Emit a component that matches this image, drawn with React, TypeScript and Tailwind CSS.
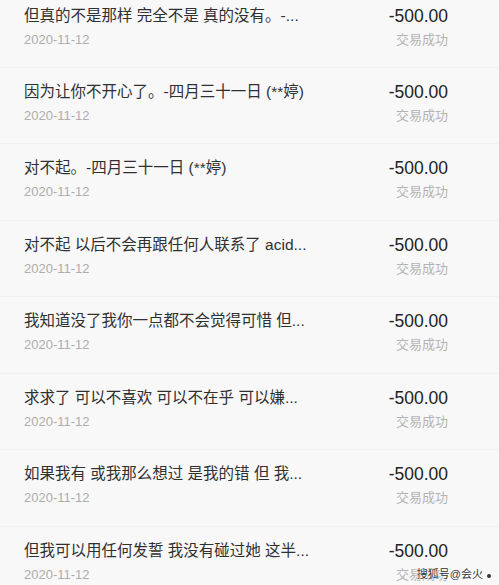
import React from "react";

const rows = [
  "但真的不是那样 完全不是 真的没有。-...",
  "因为让你不开心了。-四月三十一日 (**婷)",
  "对不起。-四月三十一日 (**婷)",
  "对不起 以后不会再跟任何人联系了 acid...",
  "我知道没了我你一点都不会觉得可惜 但...",
  "求求了 可以不喜欢 可以不在乎 可以嫌...",
  "如果我有 或我那么想过 是我的错 但 我...",
  "但我可以用任何发誓 我没有碰过她 这半...",
];

export default function App() {
  return (
    <div
      className="relative w-[499px] h-[585px] overflow-hidden bg-[#f8f8f9]"
      style={{ fontFamily: '"Liberation Sans", "Noto Sans CJK SC", sans-serif' }}
    >
      <div className="flex flex-col">
        {rows.map((t, i) => (
          <div
            key={i}
            className={`flex items-start justify-between pl-[24px] pr-[51px] border-b border-[#f1f1f3] ${
              i === 0 ? "h-[68px] pt-[6px]" : i % 2 === 0 ? "h-[77px] pt-[14px]" : "h-[76px] pt-[14px]"
            }`}
          >
            <div className="flex flex-col">
              <div className="text-[15.5px] leading-[20px] text-[#303030] whitespace-nowrap">{t}</div>
              <div className="mt-[6px] text-[13px] leading-[16px] text-[#adadad]">2020-11-12</div>
            </div>
            <div className="flex flex-col items-end">
              <div className="text-[17.5px] leading-[20px] text-[#222222]">-500.00</div>
              <div className="mt-[6px] text-[13px] leading-[16px] text-[#b3b3b3]">交易成功</div>
            </div>
          </div>
        ))}
      </div>
      <div
        className="absolute right-[8px] bottom-[4px] text-[11px] leading-[14px] text-[#333] flex items-center gap-[4px]"
        style={{ textShadow: "0 0 2px #fff, 0 0 2px #fff, 0 0 2px #fff" }}
      >
        <span>搜狐号@会火</span>
        <span className="w-[4px] h-[4px] rounded-full bg-[#333] mt-[4px]" />
      </div>
    </div>
  );
}
